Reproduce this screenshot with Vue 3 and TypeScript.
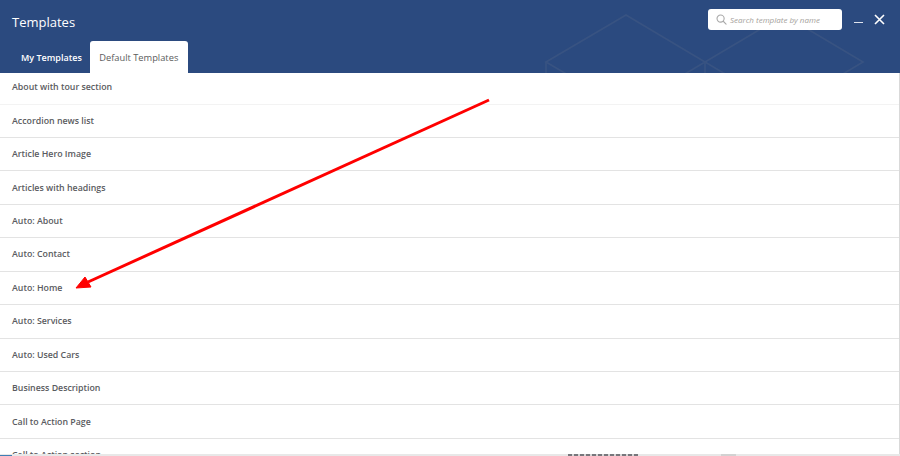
<script setup lang="ts">
const rows: string[] = [
  'About with tour section',
  'Accordion news list',
  'Article Hero Image',
  'Articles with headings',
  'Auto: About',
  'Auto: Contact',
  'Auto: Home',
  'Auto: Services',
  'Auto: Used Cars',
  'Business Description',
  'Call to Action Page',
  'Call to Action section',
]
</script>

<template>
  <div class="page">
    <header class="head">
      <svg class="pattern" width="900" height="73" viewBox="0 0 900 73" fill="none" stroke="#385382" stroke-width="1.7">
        <path d="M546 62 L626 15 L705 62 L626 109 Z" />
        <path d="M705 62 L784 15 L863 62 L784 109 Z" />
        <path d="M546 62 V90 M705 62 V90" />
      </svg>
      <div class="top">
        <h1 class="title">Templates</h1>
        <div class="tools">
          <div class="search">
            <svg width="11" height="11" viewBox="0 0 12 12" fill="none" stroke="#a9a9a9" stroke-width="1.2">
              <circle cx="5" cy="5" r="3.9" />
              <path d="M7.9 7.9 L11 11" stroke-linecap="round" />
            </svg>
            <span class="placeholder">Search template by name</span>
          </div>
          <span class="minimize"></span>
          <svg class="close" width="11" height="11" viewBox="0 0 11 11" fill="none" stroke="#fff" stroke-width="1.6">
            <path d="M1 1 L10 10 M10 1 L1 10" />
          </svg>
        </div>
      </div>
      <nav class="tabs">
        <span class="tab">My Templates</span>
        <span class="tab active">Default Templates</span>
      </nav>
    </header>
    <ul class="list">
      <li v-for="row in rows" :key="row" class="row">{{ row }}</li>
    </ul>
    <div class="strip">
      <span class="blue"></span>
      <span class="marks"></span>
      <span class="grey"></span>
    </div>
    <svg class="arrow" width="900" height="456" viewBox="0 0 900 456">
      <path d="M489 100 L88 282" stroke="#ff0000" stroke-width="3" fill="none" />
      <path d="M76 288 L85 277 L91 287 Z" fill="#ff0000" stroke="#ff0000" stroke-width="1" stroke-linejoin="round" />
    </svg>
  </div>
</template>

<style scoped>
.page {
  position: relative;
  width: 900px;
  height: 456px;
  overflow: hidden;
  background: #fff;
  font-family: "Open Sans", sans-serif;
}
.head {
  position: relative;
  height: 73px;
  background: #2b4a7f;
  overflow: hidden;
}
.pattern {
  position: absolute;
  left: 0;
  top: 0;
}
.top {
  position: relative;
  display: flex;
  justify-content: space-between;
  align-items: flex-start;
  height: 41px;
  padding: 0 15px 0 12px;
}
.title {
  margin: 12px 0 0;
  font-size: 13px;
  line-height: 20px;
  font-weight: 400;
  color: #fff;
}
.tools {
  display: flex;
  align-items: flex-start;
  padding-top: 9px;
}
.search {
  display: flex;
  align-items: center;
  gap: 3px;
  box-sizing: border-box;
  width: 134px;
  height: 21px;
  padding-left: 8px;
  background: #fff;
  border-radius: 3px;
}
.placeholder {
  font-size: 8px;
  font-style: italic;
  color: #a5a19b;
}
.minimize {
  width: 9px;
  height: 1px;
  margin: 13px 0 0 12px;
  background: #dfe4ee;
}
.close {
  margin: 5px 0 0 11px;
}
.tabs {
  position: relative;
  display: flex;
  height: 32px;
  padding-left: 12px;
}
.tab {
  display: flex;
  align-items: center;
  height: 32px;
  padding: 0 9px;
  font-size: 9px;
  font-weight: 600;
  color: #fff;
}
.tab.active {
  box-sizing: border-box;
  width: 98px;
  margin-left: -1px;
  justify-content: center;
  padding: 0;
  background: #fff;
  color: #5c5c5c;
  font-size: 9.3px;
  font-weight: 400;
  border-radius: 3px 3px 0 0;
}
.list {
  margin: 0;
  padding: 0;
  list-style: none;
  border-right: 1px solid #d9d9d9;
}
.row {
  display: flex;
  align-items: center;
  box-sizing: border-box;
  height: 33.45px;
  padding-left: 12px;
  border-bottom: 1px solid #e3e3e3;
  font-size: 8.8px;
  font-weight: 600;
  color: #5a5b60;
}
.row:first-child {
  height: 31.5px;
  padding-bottom: 2px;
  border-bottom-color: #f3f3f3;
}
.strip {
  position: absolute;
  left: 0;
  right: 0;
  bottom: 0;
  display: flex;
  height: 2px;
  background: #e8e8e8;
}
.blue {
  width: 12px;
  height: 1px;
  margin-top: 1px;
  background: #3f7fb5;
}
.marks {
  width: 70px;
  margin-left: 556px;
  background: repeating-linear-gradient(90deg, #77777c 0 4px, #d5d5d5 4px 6px);
}
.grey {
  width: 15px;
  margin-left: 83px;
  background: #d2d2d2;
}
.arrow {
  position: absolute;
  left: 0;
  top: 0;
  pointer-events: none;
}
</style>
